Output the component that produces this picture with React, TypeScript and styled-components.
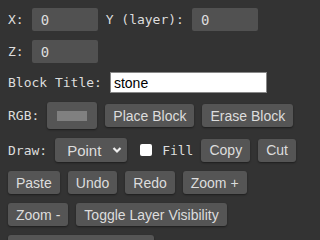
import * as React from "react";
import styled, { createGlobalStyle } from "styled-components";

const GlobalStyle = createGlobalStyle`
  html, body {
    margin: 0;
    background-color: #333;
  }
`;

const Toolbar = styled.div`
  display: flex;
  flex-wrap: wrap;
  align-items: center;
  column-gap: 8px;
  row-gap: 9px;
  padding: 8px;
  box-sizing: border-box;
  width: 320px;
`;

const Field = styled.div`
  display: flex;
  align-items: center;
  gap: 8px;
`;

const Label = styled.span`
  font-family: "DejaVu Sans Mono", monospace;
  font-size: 13px;
  color: #ddd;
  white-space: nowrap;
`;

const NumberInput = styled.input`
  width: 66px;
  height: 23px;
  box-sizing: border-box;
  padding: 0 9px;
  border: none;
  border-radius: 2px;
  background-color: #515151;
  color: #ddd;
  font-family: "DejaVu Sans Mono", monospace;
  font-size: 14px;
  outline: none;
`;

const TextInput = styled.input`
  width: 157px;
  height: 21px;
  box-sizing: border-box;
  padding: 0 3px;
  border: 1px solid #888;
  background-color: #fff;
  color: #000;
  font-family: "Liberation Sans", Arial, sans-serif;
  font-size: 14px;
  outline: none;
`;

const Button = styled.button`
  height: 23px;
  padding: 0 8px;
  border: none;
  border-radius: 3px;
  background-color: #555;
  color: #ddd;
  font-family: "Liberation Sans", Arial, sans-serif;
  font-size: 14px;
  white-space: nowrap;
  box-shadow: 0 1px 2px rgba(0, 0, 0, 0.45);
  cursor: pointer;
`;

const ColorButton = styled.div`
  display: flex;
  align-items: center;
  justify-content: center;
  width: 50px;
  height: 27px;
  border-radius: 3px;
  background-color: #555;
  box-shadow: 0 1px 2px rgba(0, 0, 0, 0.45);
`;

const Swatch = styled.span<{ $color: string }>`
  width: 30px;
  height: 10px;
  background-color: ${(p) => p.$color};
`;

const Select = styled.div`
  display: flex;
  align-items: center;
  justify-content: space-between;
  width: 72px;
  height: 24px;
  box-sizing: border-box;
  padding: 0 5px 0 12px;
  border-radius: 3px;
  background-color: #555;
  color: #ddd;
  font-family: "Liberation Sans", Arial, sans-serif;
  font-size: 15px;
  box-shadow: 0 1px 2px rgba(0, 0, 0, 0.45);
`;

const CheckField = styled.label`
  display: flex;
  align-items: center;
  gap: 10px;
  padding-left: 5px;
`;

const CheckBox = styled.span`
  width: 12px;
  height: 12px;
  border-radius: 2px;
  background-color: #fff;
`;

const Chevron = () => (
  <svg width="10" height="8" viewBox="0 0 10 8">
    <path d="M1.5 2 L5 5.5 L8.5 2" fill="none" stroke="#eee" strokeWidth="2.2" />
  </svg>
);

export default function App() {
  return (
    <>
      <GlobalStyle />
      <Toolbar>
        <Field>
          <Label>X:</Label>
          <NumberInput defaultValue="0" />
        </Field>
        <Field>
          <Label>Y (layer):</Label>
          <NumberInput defaultValue="0" />
        </Field>
        <Field>
          <Label>Z:</Label>
          <NumberInput defaultValue="0" />
        </Field>
        <Field>
          <Label>Block Title:</Label>
          <TextInput defaultValue="stone" />
        </Field>
        <Field>
          <Label>RGB:</Label>
          <ColorButton>
            <Swatch $color="#808080" />
          </ColorButton>
        </Field>
        <Button>Place Block</Button>
        <Button>Erase Block</Button>
        <Field>
          <Label>Draw:</Label>
          <Select>
            Point
            <Chevron />
          </Select>
        </Field>
        <CheckField>
          <CheckBox />
          <Label>Fill</Label>
        </CheckField>
        <Button>Copy</Button>
        <Button>Cut</Button>
        <Button>Paste</Button>
        <Button>Undo</Button>
        <Button>Redo</Button>
        <Button>Zoom +</Button>
        <Button>Zoom -</Button>
        <Button>Toggle Layer Visibility</Button>
        <Button>Export Current Layer</Button>
      </Toolbar>
    </>
  );
}
